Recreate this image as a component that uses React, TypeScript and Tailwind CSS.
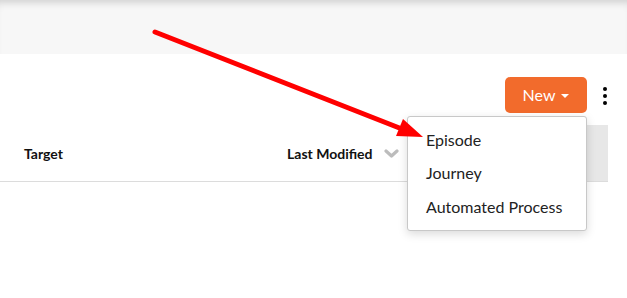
const MENU_ITEMS = ["Episode", "Journey", "Automated Process"];

export default function App() {
  return (
    <div
      className="relative h-[298px] w-[627px] overflow-hidden bg-white"
      style={{ fontFamily: "Lato, 'Open Sans', sans-serif" }}
    >
      {/* top bar */}
      <div className="h-[54px] bg-[#f7f7f7] shadow-[inset_0_8px_8px_-6px_rgba(0,0,0,0.18)]" />

      {/* toolbar */}
      <div className="flex h-[71px] items-start justify-end pr-[20px] pt-[23px]">
        <button className="flex h-[36px] w-[82px] items-center justify-center gap-[6px] rounded-[5px] bg-[#f26b2c] text-[16px] text-white">
          New
          <span className="mt-[1px] h-0 w-0 border-x-[4px] border-t-[4px] border-x-transparent border-t-white" />
        </button>
        <div className="ml-[16px] mt-[10px] flex flex-col gap-[3px]">
          <span className="size-[4px] rounded-full bg-black" />
          <span className="size-[4px] rounded-full bg-black" />
          <span className="size-[4px] rounded-full bg-black" />
        </div>
      </div>

      {/* table header */}
      <div className="mr-[19px] flex h-[57px] border-b border-[#dcdcdc] text-[14px] font-bold text-[#111]">
        <div className="flex w-[287px] items-center pl-[24px]">Target</div>
        <div className="flex w-[140px] items-center gap-[11px]">
          Last Modified
          <svg width="15" height="10" viewBox="0 0 15 10" className="mt-[1px]">
            <polyline
              points="2,2 7.5,7 13,2"
              fill="none"
              stroke="#bcbcbc"
              strokeWidth="3.2"
              strokeLinecap="round"
              strokeLinejoin="round"
            />
          </svg>
        </div>
        <div className="flex-1 bg-[#e7e7e7]" />
      </div>

      {/* dropdown menu */}
      <div className="absolute left-[407px] top-[116px] w-[180px] rounded-[3px] border border-[#c8c8c8] bg-white py-[6px] text-[16px] text-[#222] shadow-[0_3px_10px_rgba(0,0,0,0.15)]">
        {MENU_ITEMS.map((item) => (
          <div key={item} className="flex h-[33.5px] items-center pl-[18px]">
            {item}
          </div>
        ))}
      </div>

      {/* annotation arrow */}
      <svg className="absolute left-0 top-0" width="627" height="298">
        <line
          x1="155"
          y1="32"
          x2="402"
          y2="129"
          stroke="#ff0000"
          strokeWidth="5"
          strokeLinecap="round"
        />
        <polygon points="423,137 396,136 403,119" fill="#ff0000" />
      </svg>
    </div>
  );
}
